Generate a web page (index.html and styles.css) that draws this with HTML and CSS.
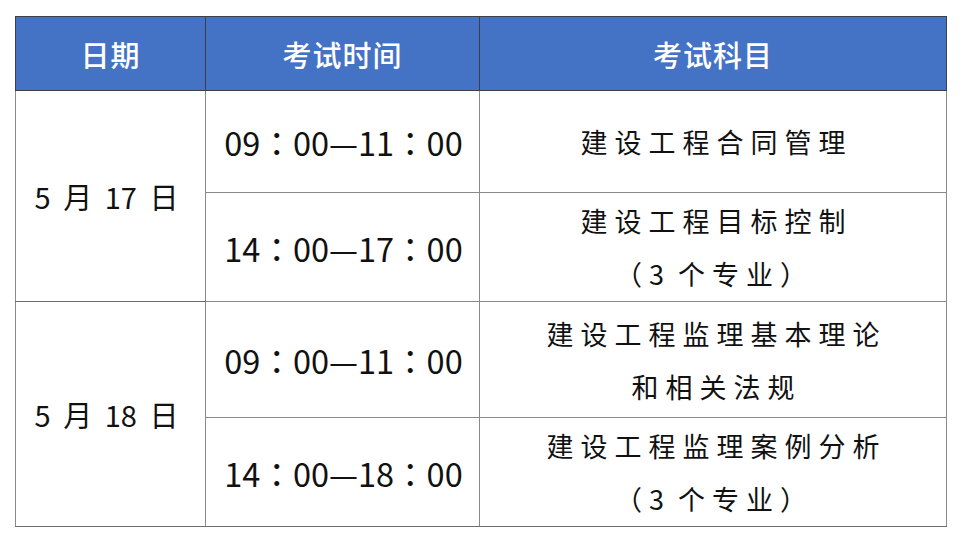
FILE: index.html
```html
<!DOCTYPE html>
<html lang="zh-CN">
<head>
<meta charset="utf-8">
<link rel="stylesheet" href="styles.css">
</head>
<body>
<div class="page">
  <table class="schedule">
    <colgroup>
      <col class="c-date">
      <col class="c-time">
      <col class="c-subj">
    </colgroup>
    <thead>
      <tr class="head">
        <th>日期</th>
        <th>考试时间</th>
        <th>考试科目</th>
      </tr>
    </thead>
    <tbody>
      <tr class="r1">
        <td class="date" rowspan="2">5 月 17 日</td>
        <td class="time">09：00—11：00</td>
        <td class="subj"><span class="line">建设工程合同管理</span></td>
      </tr>
      <tr class="r2">
        <td class="time">14：00—17：00</td>
        <td class="subj"><span class="line">建设工程目标控制</span><span class="line paren">（3 个专业）</span></td>
      </tr>
      <tr class="r3">
        <td class="date" rowspan="2">5 月 18 日</td>
        <td class="time">09：00—11：00</td>
        <td class="subj"><span class="line">建设工程监理基本理论</span><span class="line">和相关法规</span></td>
      </tr>
      <tr class="r4">
        <td class="time">14：00—18：00</td>
        <td class="subj"><span class="line">建设工程监理案例分析</span><span class="line paren">（3 个专业）</span></td>
      </tr>
    </tbody>
  </table>
</div>
</body>
</html>
```

FILE: styles.css
```css
html, body {
  margin: 0;
  padding: 0;
  background: #ffffff;
}

.page {
  padding: 16px 0 0 15px;
}

.schedule {
  border-collapse: collapse;
  table-layout: fixed;
  width: 931px;
  font-family: "Noto Sans CJK SC", "Noto Sans", sans-serif;
  color: #111111;
}

.c-date { width: 190px; }
.c-time { width: 274px; }
.c-subj { width: 467px; }

.schedule th,
.schedule td {
  padding: 0;
  text-align: center;
  vertical-align: middle;
  border: 1px solid #8a8a8a;
}

.head th {
  background: #4472c4;
  color: #ffffff;
  font-size: 29px;
  font-weight: 500;
  height: 73px;
  border: 1px solid #3a3f4a;
  letter-spacing: 1px;
}

.r1 td { height: 101px; }
.r2 td { height: 108px; }
.r3 td { height: 115px; }
.r4 td { height: 108px; }

.schedule tbody tr:last-child td,
.schedule .date {
  border-bottom-color: #6f6f6f;
}

.schedule td.date {
  font-size: 29px;
  word-spacing: 6px;
  padding-right: 8px;
}

.schedule td.time {
  font-family: "Noto Sans CJK TC", "Noto Sans", sans-serif;
  font-size: 32.5px;
  letter-spacing: 0;
  padding-left: 2px;
}

.schedule td.subj {
  font-size: 27px;
  letter-spacing: 7px;
  padding-left: 7px;
}

.line {
  display: block;
  line-height: 53px;
}

.paren {
  word-spacing: -6px;
  padding-right: 4px;
}
```
